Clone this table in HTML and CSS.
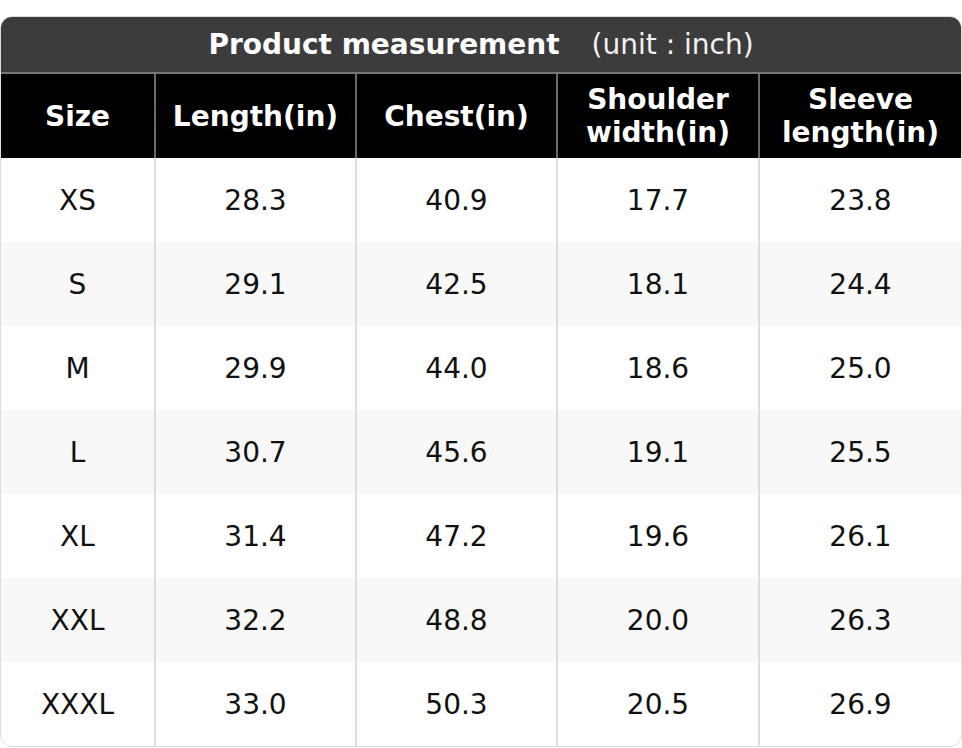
FILE: index.html
```html
<!DOCTYPE html>
<html lang="en">
<head>
<meta charset="utf-8">
<title>Product measurement</title>
<link rel="stylesheet" href="styles.css">
</head>
<body>
<div class="chart">
  <div class="title"><span class="title-main">Product measurement</span><span class="title-unit">(unit : inch)</span></div>
  <div class="row head">
    <div class="cell">Size</div>
    <div class="cell">Length(in)</div>
    <div class="cell">Chest(in)</div>
    <div class="cell">Shoulder width(in)</div>
    <div class="cell">Sleeve length(in)</div>
  </div>
  <div class="row"><div class="cell">XS</div><div class="cell">28.3</div><div class="cell">40.9</div><div class="cell">17.7</div><div class="cell">23.8</div></div>
  <div class="row alt"><div class="cell">S</div><div class="cell">29.1</div><div class="cell">42.5</div><div class="cell">18.1</div><div class="cell">24.4</div></div>
  <div class="row"><div class="cell">M</div><div class="cell">29.9</div><div class="cell">44.0</div><div class="cell">18.6</div><div class="cell">25.0</div></div>
  <div class="row alt"><div class="cell">L</div><div class="cell">30.7</div><div class="cell">45.6</div><div class="cell">19.1</div><div class="cell">25.5</div></div>
  <div class="row"><div class="cell">XL</div><div class="cell">31.4</div><div class="cell">47.2</div><div class="cell">19.6</div><div class="cell">26.1</div></div>
  <div class="row alt"><div class="cell">XXL</div><div class="cell">32.2</div><div class="cell">48.8</div><div class="cell">20.0</div><div class="cell">26.3</div></div>
  <div class="row"><div class="cell">XXXL</div><div class="cell">33.0</div><div class="cell">50.3</div><div class="cell">20.5</div><div class="cell">26.9</div></div>
</div>
</body>
</html>
```
FILE: styles.css
```css
html, body {
  margin: 0;
  padding: 0;
  background: #ffffff;
}
body {
  padding-top: 16px;
  font-family: "DejaVu Sans", "Liberation Sans", sans-serif;
  font-size: 28px;
  color: #111111;
}
.chart {
  width: 960px;
  border: 1px solid #dddddd;
  border-radius: 12px;
  overflow: hidden;
  background: #ffffff;
}
.title {
  height: 55px;
  background: #3c3c3c;
  color: #ffffff;
  border-bottom: 2px solid #777777;
  display: flex;
  align-items: center;
  justify-content: center;
}
.title-main {
  font-weight: bold;
}
.title-unit {
  margin-left: 32px;
  color: #f2f2f2;
}
.row {
  display: grid;
  grid-template-columns: 155px 201px 201px 202px 201px;
  height: 84px;
}
.row.alt {
  background: #f8f8f8;
}
.cell {
  box-sizing: border-box;
  border-right: 2px solid #dddddd;
  display: flex;
  align-items: center;
  justify-content: center;
  text-align: center;
  padding: 0 8px;
}
.cell:last-child {
  border-right: none;
}
.head {
  background: #000000;
  color: #ffffff;
  font-weight: bold;
}
.head .cell {
  border-right-color: #6a6a6a;
  line-height: 33px;
}
.head .cell:last-child {
  border-right: none;
}
```
